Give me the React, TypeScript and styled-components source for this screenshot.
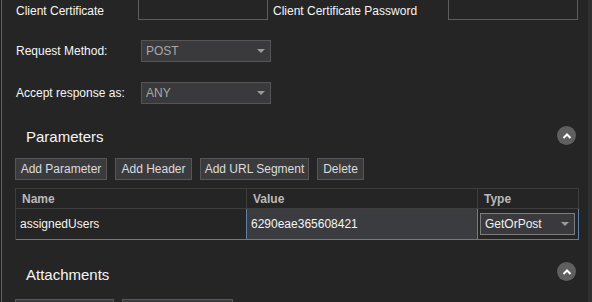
import React from 'react';
import styled, { createGlobalStyle } from 'styled-components';

const GlobalStyle = createGlobalStyle`
  html, body {
    margin: 0;
    padding: 0;
    background: #252525;
    overflow: hidden;
  }
  body {
    font-family: "Liberation Sans", Arial, sans-serif;
    font-size: 12px;
    color: #f0f0f0;
  }
`;

const Window = styled.div`
  width: 592px;
  height: 302px;
  display: flex;
  overflow: hidden;
  background: #252525;
  border-left: 1px solid #1d1d1d;
`;

const Accent = styled.div`
  width: 1px;
  background: #3a6a9a;
  flex-shrink: 0;
`;

const Content = styled.div`
  flex: 1;
  padding-left: 14px;
  margin-top: -8px;
  display: flex;
  flex-direction: column;
`;

const ScrollBar = styled.div`
  width: 5px;
  flex-shrink: 0;
  background: #303030;
`;

const CertRow = styled.div`
  display: flex;
  align-items: flex-end;
  height: 28px;
`;

const Label = styled.label<{ $width: number }>`
  width: ${p => p.$width}px;
  flex-shrink: 0;
  line-height: 16px;
  padding-bottom: 1px;
  color: #f6f6f6;
`;

const TextBox = styled.div`
  width: 130px;
  height: 28px;
  box-sizing: border-box;
  border: 1px solid #5e5e5e;
  background: #252525;
  flex-shrink: 0;
`;

const FormRow = styled.div<{ $top: number }>`
  display: flex;
  align-items: center;
  margin-top: ${p => p.$top}px;
  height: 22px;
`;

const Combo = styled.div<{ $width: number; $light?: boolean }>`
  width: ${p => p.$width}px;
  height: 22px;
  box-sizing: border-box;
  border: 1px solid ${p => (p.$light ? '#7c7c7c' : '#555')};
  background: #3a3a3c;
  display: flex;
  align-items: center;
  justify-content: space-between;
  padding: 0 5px 0 4px;
  color: ${p => (p.$light ? '#f0f0f0' : '#a8a8a8')};
`;

const Arrow = styled.span`
  width: 0;
  height: 0;
  border-left: 4px solid transparent;
  border-right: 4px solid transparent;
  border-top: 4px solid #9a9a9a;
`;

const SectionHeader = styled.div<{ $top: number }>`
  display: flex;
  align-items: center;
  justify-content: space-between;
  margin-top: ${p => p.$top}px;
  padding-left: 10px;
  padding-right: 12px;
  height: 22px;
`;

const SectionTitle = styled.span`
  font-size: 15px;
  color: #f6f6f6;
`;

const Collapse = styled.button<{ $shift: number }>`
  width: 19px;
  height: 19px;
  border-radius: 50%;
  border: none;
  padding: 0;
  background: #5f5f5f;
  display: flex;
  align-items: center;
  justify-content: center;
  margin-top: ${p => p.$shift}px;
`;

const ButtonBar = styled.div<{ $top: number }>`
  display: flex;
  gap: 8px;
  margin-top: ${p => p.$top}px;
  margin-left: -1px;
`;

const Button = styled.button<{ $width: number }>`
  width: ${p => p.$width}px;
  height: 22px;
  box-sizing: border-box;
  background: #3b3b3e;
  border: 1px solid #56565a;
  color: #dcdcdc;
  font-family: inherit;
  font-size: 12px;
  padding: 0;
`;

const Table = styled.div`
  margin-top: 8px;
  margin-left: -1px;
  width: 564px;
  box-sizing: border-box;
  border: 1px solid #3e3e3e;
  border-bottom: none;
  display: grid;
  grid-template-columns: 230px 231px 101px;
`;

const HeadCell = styled.div<{ $first?: boolean }>`
  height: 20px;
  box-sizing: border-box;
  padding-left: 6px;
  display: flex;
  align-items: center;
  font-weight: bold;
  color: #b9b9b9;
  border-bottom: 1px solid #3e3e3e;
  border-left: ${p => (p.$first ? 'none' : '1px solid #3e3e3e')};
`;

const Cell = styled.div<{ $variant?: 'plain' | 'edit' | 'combo' }>`
  height: 31px;
  box-sizing: border-box;
  display: flex;
  align-items: center;
  padding-left: ${p => (p.$variant === 'combo' ? '2px' : '4px')};
  border-bottom: 1px solid #6b7a8c;
  background: ${p => (p.$variant === 'edit' ? '#3b3c40' : 'transparent')};
  border-left: ${p => (p.$variant === 'plain' ? 'none' : '1px solid #5c80a8')};
  border-right: ${p => (p.$variant === 'combo' ? '1px solid #5c80a8' : 'none')};
  margin-right: ${p => (p.$variant === 'combo' ? '-1px' : '0')};
  color: #f4f4f4;
`;

const Chevron = () => (
  <svg width="10" height="8" viewBox="0 0 10 8">
    <path d="M1.5 6 L5 2.5 L8.5 6" fill="none" stroke="#ffffff" strokeWidth="2" />
  </svg>
);

const App: React.FC = () => {
  return (
    <>
      <GlobalStyle />
      <Window>
        <Accent />
        <Content>
          <CertRow>
            <Label $width={122}>Client Certificate</Label>
            <TextBox />
            <div style={{ width: 5 }} />
            <Label $width={175}>Client Certificate Password</Label>
            <TextBox />
          </CertRow>

          <FormRow $top={20}>
            <Label $width={125}>Request Method:</Label>
            <Combo $width={130}>
              POST
              <Arrow />
            </Combo>
          </FormRow>

          <FormRow $top={20}>
            <Label $width={125}>Accept response as:</Label>
            <Combo $width={130}>
              ANY
              <Arrow />
            </Combo>
          </FormRow>

          <SectionHeader $top={23}>
            <SectionTitle>Parameters</SectionTitle>
            <Collapse $shift={-1}>
              <Chevron />
            </Collapse>
          </SectionHeader>

          <ButtonBar $top={13}>
            <Button $width={92}>Add Parameter</Button>
            <Button $width={77}>Add Header</Button>
            <Button $width={109}>Add URL Segment</Button>
            <Button $width={47}>Delete</Button>
          </ButtonBar>

          <Table>
            <HeadCell $first>Name</HeadCell>
            <HeadCell>Value</HeadCell>
            <HeadCell>Type</HeadCell>
            <Cell $variant="plain">assignedUsers</Cell>
            <Cell $variant="edit">6290eae365608421</Cell>
            <Cell $variant="combo">
              <Combo $width={95} $light>
                GetOrPost
                <Arrow />
              </Combo>
            </Cell>
          </Table>

          <SectionHeader $top={26}>
            <SectionTitle>Attachments</SectionTitle>
            <Collapse $shift={-6}>
              <Chevron />
            </Collapse>
          </SectionHeader>

          <ButtonBar $top={16}>
            <Button $width={99}>Add Attachment</Button>
            <Button $width={111}>Remove Attachment</Button>
          </ButtonBar>
        </Content>
        <ScrollBar />
      </Window>
    </>
  );
};

export default App;
